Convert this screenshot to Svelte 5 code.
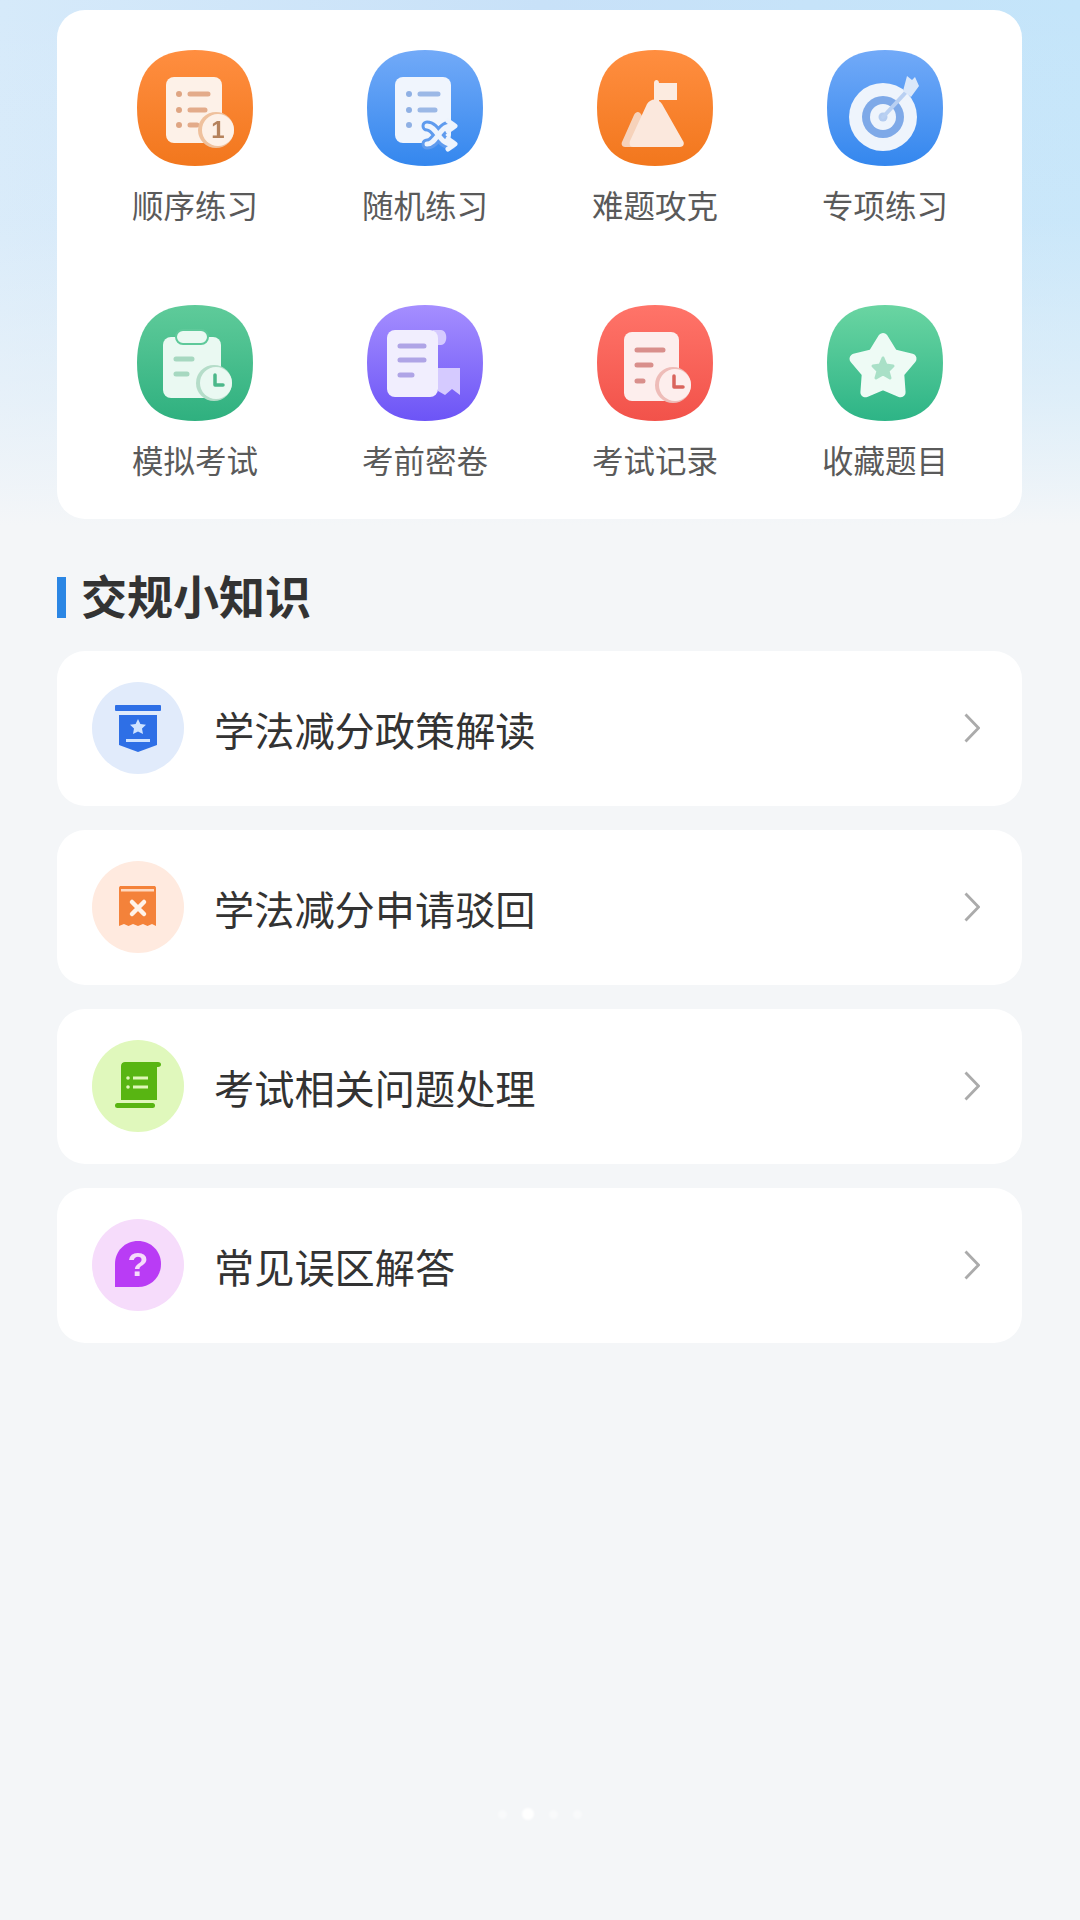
<script>
  const tiles = [
    { key: 'order', label: '顺序练习', grad: 'gOrange' },
    { key: 'shuffle', label: '随机练习', grad: 'gBlue' },
    { key: 'peak', label: '难题攻克', grad: 'gOrange' },
    { key: 'target', label: '专项练习', grad: 'gBlue' },
    { key: 'mock', label: '模拟考试', grad: 'gGreen' },
    { key: 'paper', label: '考前密卷', grad: 'gPurple' },
    { key: 'record', label: '考试记录', grad: 'gRed' },
    { key: 'star', label: '收藏题目', grad: 'gMint' }
  ];

  const tips = [
    { key: 'policy', label: '学法减分政策解读', bg: '#e1ebfb' },
    { key: 'reject', label: '学法减分申请驳回', bg: '#ffeadf' },
    { key: 'exam', label: '考试相关问题处理', bg: '#e0f8bc' },
    { key: 'faq', label: '常见误区解答', bg: '#f6dcfb' }
  ];

  const squircle = 'M58 0C97 0 116 19 116 58C116 97 97 116 58 116C19 116 0 97 0 58C0 19 19 0 58 0Z';
</script>

<!-- shared gradients for the tile icons -->
<svg class="defs" width="0" height="0" aria-hidden="true">
  <defs>
    <linearGradient id="gOrange" x1="0" y1="0" x2="0" y2="1">
      <stop offset="0%" stop-color="#ff8e40" />
      <stop offset="100%" stop-color="#f2771d" />
    </linearGradient>
    <linearGradient id="gBlue" x1="0" y1="0" x2="0" y2="1">
      <stop offset="0%" stop-color="#72aaf8" />
      <stop offset="100%" stop-color="#3487ee" />
    </linearGradient>
    <linearGradient id="gGreen" x1="0" y1="0" x2="0" y2="1">
      <stop offset="0%" stop-color="#5fcb9a" />
      <stop offset="100%" stop-color="#2fb07f" />
    </linearGradient>
    <linearGradient id="gMint" x1="0" y1="0" x2="0" y2="1">
      <stop offset="0%" stop-color="#6ad5a2" />
      <stop offset="100%" stop-color="#2db486" />
    </linearGradient>
    <linearGradient id="gPurple" x1="0" y1="0" x2="0" y2="1">
      <stop offset="0%" stop-color="#a58eff" />
      <stop offset="100%" stop-color="#6c54f6" />
    </linearGradient>
    <linearGradient id="gRed" x1="0" y1="0" x2="0" y2="1">
      <stop offset="0%" stop-color="#ff7469" />
      <stop offset="100%" stop-color="#f2524a" />
    </linearGradient>
  </defs>
</svg>

<div class="page">
  <section class="panel">
    {#each tiles as t}
      <div class="tile">
        <svg class="tile-icon" width="116" height="116" viewBox="0 0 116 116">
          <path d={squircle} fill="url(#{t.grad})" />
          {#if t.key === 'order'}
            <rect x="29" y="27" width="56" height="66" rx="8" fill="#fdf1e8" />
            <g fill="#dfa583">
              <circle cx="42" cy="44" r="3" /><circle cx="42" cy="60" r="3" /><circle cx="42" cy="75" r="3" />
            </g>
            <g stroke="#e3ab8a" stroke-width="5" stroke-linecap="round">
              <path d="M53 44H71M53 60H68M53 75H60" />
            </g>
            <circle cx="79" cy="80" r="18" fill="#efc19d" />
            <circle cx="81" cy="80" r="16" fill="#fdf1e8" />
            <text x="81" y="88" class="badge-num" fill="#b5825c">1</text>
          {:else if t.key === 'shuffle'}
            <rect x="28" y="27" width="56" height="66" rx="8" fill="#f0f5fd" />
            <g fill="#8fb0e4">
              <circle cx="42" cy="44" r="3" /><circle cx="42" cy="60" r="3" /><circle cx="42" cy="75" r="3" />
            </g>
            <g stroke="#9bb8e6" stroke-width="5" stroke-linecap="round">
              <path d="M53 44H71M53 60H68" />
            </g>
            <g fill="none" stroke-linecap="round" stroke-linejoin="round">
              <path d="M60 76C70 76 72 94 84 94M60 94C70 94 72 76 84 76" stroke="#5f9bee" stroke-width="11" />
              <path d="M60 76C70 76 72 94 84 94M60 94C70 94 72 76 84 76M81 71L88 76L81 81M81 89L88 94L81 99" stroke="#eef4fd" stroke-width="5" />
            </g>
          {:else if t.key === 'peak'}
            <path d="M57 33C57 29 62 29 62 33H80V50H62V56H57Z" fill="#fcebe0" />
            <path d="M37 65C40 60 43 62 45 66L62 97H28C25 97 24 94 25 92Z" fill="#f6d2ba" />
            <path d="M50 54C54 48 61 48 65 54L86 91C88 94 86 97 83 97H36C33 97 32 94 33 91Z" fill="#fbe8dd" />
          {:else if t.key === 'target'}
            <circle cx="56" cy="67" r="34" fill="#eef4fc" />
            <circle cx="56" cy="67" r="21" fill="#7ea9e8" />
            <circle cx="56" cy="67" r="13" fill="#eef4fc" />
            <circle cx="56" cy="67" r="4.5" fill="#b4ccf0" />
            <path d="M56 67L81 40" stroke="#b9d0f2" stroke-width="4" stroke-linecap="round" />
            <path d="M76 41L80 26L85 30L88 27L92 36L84 47Z" fill="#dbe8fa" />
          {:else if t.key === 'mock'}
            <rect x="26" y="32" width="58" height="61" rx="8" fill="#eaf9f2" />
            <rect x="39" y="25" width="32" height="14" rx="7" fill="#eaf9f2" stroke="#5ec99a" stroke-width="2" />
            <g stroke="#a6d8c0" stroke-width="5" stroke-linecap="round">
              <path d="M39 54H55M39 69H50" />
            </g>
            <circle cx="77" cy="78" r="18" fill="#b5ddc9" />
            <circle cx="79" cy="78" r="16" fill="#eaf9f2" />
            <path d="M78 70V80H86" fill="none" stroke="#4cb88a" stroke-width="3.5" stroke-linecap="round" stroke-linejoin="round" />
          {:else if t.key === 'paper'}
            <path d="M66 25H74C81 25 81 40 74 40H68Z" fill="#d5caff" />
            <rect x="20" y="25" width="51" height="67" rx="8" fill="#f1eefe" />
            <g stroke="#afa4e6" stroke-width="5" stroke-linecap="round">
              <path d="M33 41H57M33 55H57M33 70H45" />
            </g>
            <path d="M71 63H93V90L85 84L78 90L71 86Z" fill="#d5caff" />
          {:else if t.key === 'record'}
            <rect x="27" y="27" width="55" height="69" rx="8" fill="#fdeeed" />
            <g stroke="#d98f8b" stroke-width="5" stroke-linecap="round">
              <path d="M40 45H66M40 60H54M40 76H46" />
            </g>
            <circle cx="76" cy="80" r="18" fill="#eebcb8" />
            <circle cx="78" cy="80" r="16" fill="#fdeeed" />
            <path d="M77 71V82H86" fill="none" stroke="#d9645c" stroke-width="3.5" stroke-linecap="round" stroke-linejoin="round" />
          {:else if t.key === 'star'}
            <path d="M56 33L66 49.200L84.500 53.700L72.200 68.300L73.600 87.300L56 80L38.400 87.300L39.800 68.300L27.500 53.700L46 49.200Z" fill="#eefbf5" stroke="#eefbf5" stroke-width="10" stroke-linejoin="round" />
            <path d="M56 53L59 60L66 61L61 66L63 73L56 69L49 73L51 66L46 61L53 60Z" fill="#a9e0c7" stroke="#a9e0c7" stroke-width="3" stroke-linejoin="round" />
          {/if}
        </svg>
        <span class="tile-label">{t.label}</span>
      </div>
    {/each}
  </section>

  <h2 class="section-title"><span>交规小知识</span></h2>

  <ul class="tips">
    {#each tips as tip}
      <li class="tip">
        <svg class="tip-icon" width="92" height="92" viewBox="0 0 92 92">
          <circle cx="46" cy="46" r="46" fill={tip.bg} />
          {#if tip.key === 'policy'}
            <rect x="23" y="23" width="46" height="6" rx="1" fill="#2e6fe6" />
            <path d="M27 33H65V63L46 70L27 63Z" fill="#2e6fe6" />
            <path d="M46 37L48.400 42L54 42.800L50 46.600L51 52L46 49.400L41 52L42 46.600L38 42.800L43.600 42Z" fill="#cfe3ff" />
            <rect x="34" y="57" width="24" height="3" fill="#cfe3ff" />
          {:else if tip.key === 'reject'}
            <path d="M27 27C27 25.500 28 25 29 25H62C63 25 64 25.500 64 27V65L60 63L55.500 65L51 63L46 65L41 63L36.500 65L32 63L27 65Z" fill="#f4823a" />
            <rect x="29" y="28" width="33" height="2.500" fill="#ffd9c0" />
            <path d="M40 41L52 53M52 41L40 53" stroke="#fff3ea" stroke-width="4.500" stroke-linecap="round" />
          {:else if tip.key === 'exam'}
            <path d="M33 22H66C70 22 70 27 66 27H65V60H29V26C29 23.500 31 22 33 22Z" fill="#58b512" />
            <rect x="23" y="63" width="40" height="5" rx="2.500" fill="#58b512" />
            <g fill="#dff7b8">
              <circle cx="36" cy="38" r="1.800" /><circle cx="36" cy="47" r="1.800" />
              <rect x="41" y="36.500" width="15" height="3" /><rect x="41" y="45.500" width="15" height="3" />
            </g>
          {:else if tip.key === 'faq'}
            <path d="M46 22C59 22 69 32 69 45C69 58 59 68 46 68H23V45C23 32 33 22 46 22Z" fill="#b93cf5" />
            <text x="46" y="57" class="faq-mark" fill="#f6dcfb">?</text>
          {/if}
        </svg>
        <span class="tip-label">{tip.label}</span>
        <svg class="chev" width="16" height="30" viewBox="0 0 16 30">
          <path d="M1.500 1.500L14.500 15L1.500 28.500" fill="none" stroke="#ababab" stroke-width="2.800" />
        </svg>
      </li>
    {/each}
  </ul>

  <div class="dots" aria-hidden="true">
    <i></i><i class="on"></i><i></i><i></i>
  </div>
</div>

<style>
  :global(body) {
    margin: 0;
    background: #f4f6f8;
  }

  .defs { position: absolute; }

  .page {
    box-sizing: border-box;
    width: 1080px;
    height: 1920px;
    padding: 10px 58px 0 57px;
    font-family: "Noto Sans CJK SC", "Noto Sans", sans-serif;
    background:
      linear-gradient(180deg, rgba(244,246,248,0) 0, rgba(244,246,248,0.12) 220px, rgba(244,246,248,0.55) 400px, rgba(244,246,248,0.85) 490px, #f4f6f8 525px) 0 0 / 100% 525px no-repeat,
      linear-gradient(90deg, #d6eafa 0, #c8e1f8 50%, #c4e5fa 100%) 0 0 / 100% 525px no-repeat,
      #f4f6f8;
  }

  /* practice grid */
  .panel {
    display: grid;
    grid-template-columns: repeat(4, 230px);
    grid-auto-rows: 255px;
    box-sizing: border-box;
    height: 509px;
    padding: 40px 22px 0 23px;
    background: #fff;
    border-radius: 28px;
  }
  .tile {
    display: flex;
    flex-direction: column;
    align-items: center;
  }
  .tile-icon {
    display: block;
    filter: blur(0.4px);
  }
  .tile-label {
    margin-top: 16px;
    font-size: 31.500px;
    line-height: 44px;
    color: #5a5a5a;
  }
  .badge-num {
    font: 700 24px "Liberation Sans", sans-serif;
    text-anchor: middle;
  }
  .faq-mark {
    font: 700 34px "Liberation Sans", sans-serif;
    text-anchor: middle;
  }

  /* section heading */
  .section-title {
    display: flex;
    align-items: center;
    gap: 15px;
    height: 60px;
    margin: 48px 0 0;
    font-size: 46px;
    font-weight: 700;
    color: #333;
  }
  .section-title::before {
    content: "";
    width: 9px;
    height: 41px;
    background: #2b86e4;
  }
  .section-title span {
    line-height: 1;
    padding-bottom: 6px;
  }

  /* tip rows */
  .tips {
    display: flex;
    flex-direction: column;
    gap: 24px;
    margin: 24px 0 0;
    padding: 0;
    list-style: none;
  }
  .tip {
    box-sizing: border-box;
    display: flex;
    align-items: center;
    height: 155px;
    padding: 0 42px 2px 35px;
    background: #fff;
    border-radius: 28px;
  }
  .tip-icon {
    flex: none;
    display: block;
    filter: blur(0.3px);
  }
  .tip-label {
    flex: 1;
    margin: 2px 0 0 30px;
    font-size: 40.200px;
    color: #333;
  }
  .chev { flex: none; display: block; }

  /* faint pager dots */
  .dots {
    display: flex;
    justify-content: center;
    align-items: center;
    gap: 15px;
    margin-top: 465px;
  }
  .dots i {
    width: 9px;
    height: 9px;
    border-radius: 50%;
    background: rgba(255,255,255,0.45);
    filter: blur(1px);
  }
  .dots i.on {
    width: 12px;
    height: 12px;
    background: #fff;
  }
</style>
